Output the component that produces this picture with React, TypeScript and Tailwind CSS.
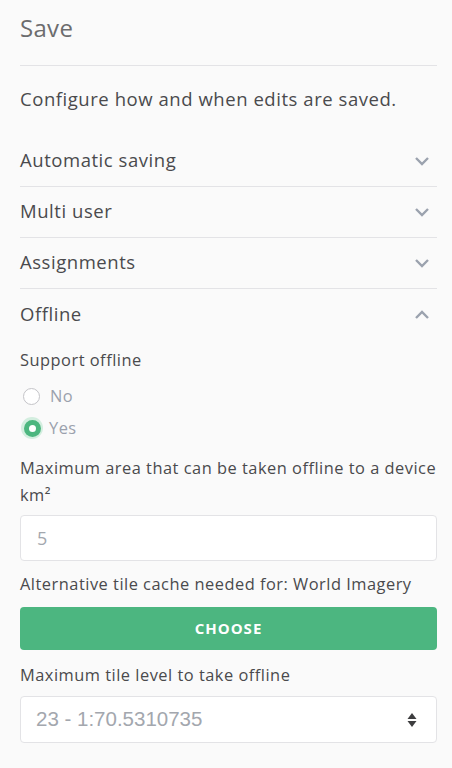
import React from "react";

function Chevron({ up }: { up?: boolean }) {
  return (
    <svg width="16" height="10" viewBox="0 0 16 10" className="shrink-0">
      <path
        d={up ? "M2 8 L8 2 L14 8" : "M2 2 L8 8 L14 2"}
        fill="none"
        stroke="#9ba2ae"
        strokeWidth="2.4"
      />
    </svg>
  );
}

function Row({ label, up, border = true }: { label: string; up?: boolean; border?: boolean }) {
  return (
    <div
      className={
        "flex items-center justify-between h-[51px] pr-[7px] " +
        (border ? "border-b border-[#e3e3e6]" : "")
      }
    >
      <span className="pb-[2px] text-[18.5px] tracking-[0.55px] text-[#4a4a4d]">{label}</span>
      <Chevron up={up} />
    </div>
  );
}

export default function App() {
  return (
    <div
      className="min-h-screen w-full bg-[#fafafa] pl-5 pr-[15px]"
      style={{ fontFamily: "'Open Sans', sans-serif" }}
    >
      <div className="pt-[14px] pb-[23px] border-b border-[#e3e3e6]">
        <h1 className="text-[24px] leading-[28px] tracking-[0.3px] text-[#6c6c6e]">Save</h1>
      </div>
      <p className="pt-[21px] pb-[25px] text-[18.5px] leading-[24px] tracking-[0.55px] text-[#4a4a4d]">
        Configure how and when edits are saved.
      </p>
      <Row label="Automatic saving" />
      <Row label="Multi user" />
      <Row label="Assignments" />
      <Row label="Offline" up border={false} />
      <div className="flex flex-col">
        <div className="mt-[8px] text-[16.4px] leading-[24px] tracking-[0.5px] text-[#4a4a4d]">
          Support offline
        </div>
        <label className="mt-[12px] flex items-center h-[24px]">
          <span className="ml-[3px] w-[17px] h-[17px] rounded-full border border-[#c4c4c8] bg-white" />
          <span className="ml-[10px] text-[16.4px] tracking-[0.5px] text-[#9aa1ad]">No</span>
        </label>
        <label className="mt-[8px] flex items-center h-[24px]">
          <span className="ml-[1px] w-[22px] h-[22px] rounded-full bg-[#d3eedf] flex items-center justify-center">
            <span className="w-[17px] h-[17px] rounded-full bg-[#4cb67f] flex items-center justify-center">
              <span className="w-[7px] h-[7px] rounded-full bg-white" />
            </span>
          </span>
          <span className="ml-[6px] text-[16.4px] tracking-[0.5px] text-[#9aa1ad]">Yes</span>
        </label>
        <div className="mt-[14px] text-[16.4px] leading-[27px] tracking-[0.5px] text-[#4a4a4d]">
          Maximum area that can be taken offline to a device
          <br />
          km²
        </div>
        <div className="mt-[7px] h-[46px] rounded-[4px] border border-[#e3e3e6] bg-white flex items-center pl-[16px]">
          <span className="text-[18px] text-[#a3a7ae]">5</span>
        </div>
        <div className="mt-[11px] text-[16.4px] leading-[24px] tracking-[0.5px] text-[#4a4a4d]">
          Alternative tile cache needed for: World Imagery
        </div>
        <button className="mt-[11px] h-[43px] rounded-[4px] bg-[#4cb680] text-white text-[15px] font-bold tracking-[1px]">
          CHOOSE
        </button>
        <div className="mt-[13px] text-[16.4px] leading-[24px] tracking-[0.5px] text-[#4a4a4d]">
          Maximum tile level to take offline
        </div>
        <div className="mt-[9px] h-[47px] rounded-[4px] border border-[#e3e3e6] bg-white flex items-center justify-between pl-[15px] pr-[19px]">
          <span
            className="text-[20.5px] text-[#a3a7ae]"
            style={{ fontFamily: "'Liberation Sans', Arial, sans-serif" }}
          >
            23 - 1:70.5310735
          </span>
          <svg width="10" height="16" viewBox="0 0 10 16">
            <path d="M5 1 L9.5 7 L0.5 7 Z" fill="#3d3d3f" />
            <path d="M5 15 L9.5 9 L0.5 9 Z" fill="#3d3d3f" />
          </svg>
        </div>
      </div>
    </div>
  );
}
